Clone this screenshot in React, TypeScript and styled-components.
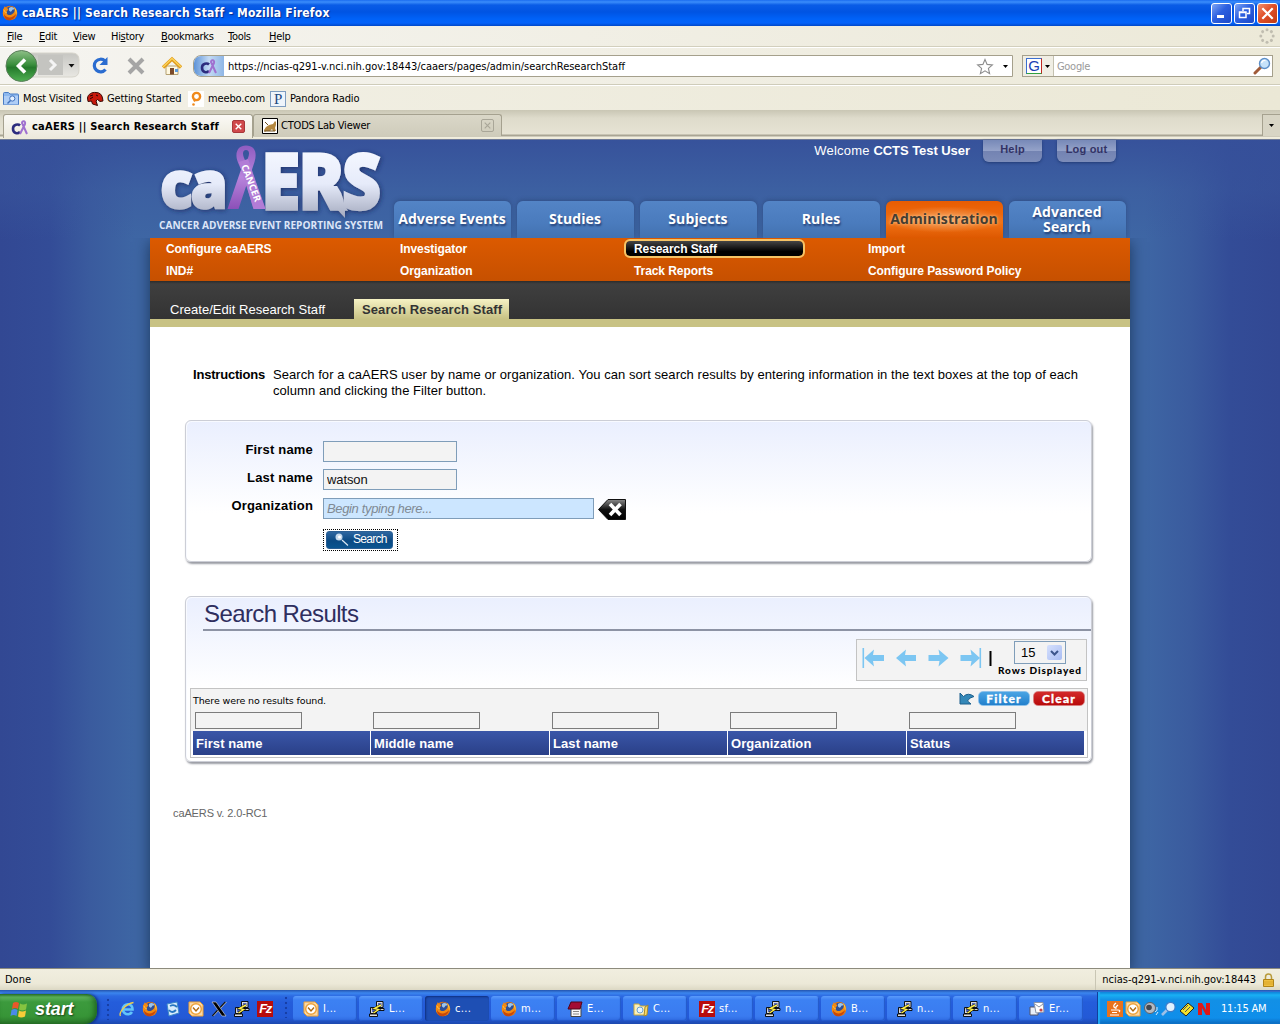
import React from "react";
import styled, { createGlobalStyle, css } from "styled-components";

const tahoma = `"DejaVu Sans Condensed", "DejaVu Sans", sans-serif`;
const arial = `"Liberation Sans", Arial, sans-serif`;
const myriad = `"Open Sans", "Noto Sans", sans-serif`;

const Global = createGlobalStyle`
  * { box-sizing: border-box; }
  body { margin: 0; font-family: ${arial}; overflow: hidden; }
  svg { display: block; flex: none; }
  input { outline: none; }
`;

const Desktop = styled.div`
  width: 1280px;
  height: 1024px;
  display: flex;
  flex-direction: column;
  overflow: hidden;
`;

/* ---------- Browser chrome ---------- */

const TitleBar = styled.header`
  height: 26px;
  flex: none;
  display: flex;
  align-items: center;
  padding: 0 2px;
  background: linear-gradient(#1b6cf0 0, #3b8dfb 2px, #0a5ce6 5px, #0054e3 12px, #0062f8 19px, #0462fa 23px, #0148c8 26px);
`;

const TitleText = styled.h1`
  flex: 1;
  margin: 0 0 0 4px;
  font: bold 12px/28px ${tahoma};
  letter-spacing: 0.21px;
  color: #fff;
  text-shadow: 1px 1px 1px #0a2a8c;
`;

const WinButton = styled.span<{ $close?: boolean }>`
  width: 21px;
  height: 21px;
  margin-left: 2px;
  display: flex;
  align-items: center;
  justify-content: center;
  border: 1px solid #fff;
  border-radius: 3px;
  background: ${(p) =>
    p.$close
      ? "linear-gradient(135deg, #f0906e, #e0502a 45%, #c03a12)"
      : "linear-gradient(135deg, #7fa6f5, #2c60e0 45%, #1c48c8)"};
`;

const MenuBar = styled.nav`
  height: 21px;
  flex: none;
  display: flex;
  align-items: center;
  padding: 0 5px 0 7px;
  background: linear-gradient(90deg, #f5f4f0, #ece9d8);
  border-bottom: 1px solid #d2cfbd;
  font: 11px/20px ${tahoma};
  color: #000;
`;

const MenuItem = styled.span<{ $w: number }>`
  width: ${(p) => p.$w}px;
  padding-top: 1px;
  white-space: nowrap;
  letter-spacing: -0.3px;
`;

const MenuSpacer = styled.span`
  flex: 1;
`;

const NavBar = styled.div`
  height: 38px;
  flex: none;
  display: flex;
  align-items: center;
  padding-left: 3px;
  background: linear-gradient(90deg, #f5f4f0, #ece9d8);
  border-top: 1px solid #fff;
  border-bottom: 1px solid #cfccba;
`;

const UrlBox = styled.div`
  width: 820px;
  height: 22px;
  margin-left: 11px;
  display: flex;
  align-items: center;
  background: #fff;
  border: 1px solid #a5a08c;
  border-radius: 8px 0 0 8px;
  overflow: hidden;
`;

const SiteBadge = styled.span`
  width: 30px;
  height: 20px;
  display: flex;
  justify-content: center;
  align-items: center;
  background: linear-gradient(90deg, #5d93d8, #c3daf4 50%, #8fb6e6);
`;

const UrlText = styled.span`
  flex: 1;
  margin-left: 4px;
  padding-top: 1px;
  font: 11px/20px ${tahoma};
  letter-spacing: -0.015px;
  white-space: nowrap;
`;

const SearchBox = styled.div`
  width: 251px;
  height: 22px;
  margin-left: 9px;
  display: flex;
  align-items: center;
  background: #fff;
  border: 1px solid #a5a08c;
`;

const EnginePicker = styled.span`
  width: 31px;
  height: 20px;
  display: flex;
  align-items: center;
  gap: 3px;
  padding-left: 3px;
  background: #f0eee4;
  border-right: 1px solid #c4c1b0;
`;

const EngineLogo = styled.span`
  width: 16px;
  height: 16px;
  border: 1px solid #3b6fd0;
  border-right-color: #c02a20;
  border-bottom-color: #30a040;
  background: #fff;
  color: #1c3fb4;
  font: 15px/14px ${arial};
  text-align: center;
`;

const Placeholder = styled.span`
  flex: 1;
  margin-left: 3px;
  padding-top: 1px;
  font: 11px/20px ${tahoma};
  letter-spacing: -0.3px;
  color: #9a9a9a;
`;

const BookmarkBar = styled.div`
  height: 25px;
  flex: none;
  display: flex;
  align-items: center;
  padding-left: 3px;
  background: linear-gradient(90deg, #f2f0e6, #ebe8d6);
  border-top: 1px solid #fff;
`;

const Bookmark = styled.span<{ $w: number; $gap?: number }>`
  width: ${(p) => p.$w}px;
  display: flex;
  align-items: center;
  gap: ${(p) => p.$gap ?? 4}px;
  padding-top: 1px;
  font: 11px/26px ${tahoma};
  letter-spacing: -0.14px;
  white-space: nowrap;
`;

const BrowserTabs = styled.div`
  height: 30px;
  flex: none;
  display: flex;
  align-items: flex-start;
  padding: 4px 0 0 3px;
  background: linear-gradient(#c9c6b4, #dedbcb 8px, #e6e3d4 24px, #a9a594 25px, #a9a594 26px, #f2efe0 27px, #ece9d8 29px, #6f7a98 29px);
`;

const BrowserTab = styled.div<{ $active?: boolean; $w: number }>`
  width: ${(p) => p.$w}px;
  height: ${(p) => (p.$active ? 24 : 22)}px;
  display: flex;
  align-items: center;
  padding: 0 7px;
  padding-left: ${(p) => (p.$active ? 7 : 8)}px;
  border: 1px solid #a5a18f;
  border-bottom: 0;
  border-radius: 3px 3px 0 0;
  background: ${(p) => (p.$active ? "linear-gradient(#fbfaf6, #ece9dc)" : "linear-gradient(#dad7c8, #cfccbb)")};
  font: ${(p) => (p.$active ? "bold 11px/20px" : "normal 11px/22px")} ${tahoma};
  letter-spacing: ${(p) => (p.$active ? "0.24px" : "-0.2px")};
  white-space: nowrap;
`;

const TabLabel = styled.span`
  flex: 1;
  margin-left: 3px;
`;

const TabClose = styled.span<{ $active?: boolean }>`
  width: 13px;
  height: 13px;
  display: flex;
  align-items: center;
  justify-content: center;
  border-radius: 2px;
  border: 1px solid ${(p) => (p.$active ? "#a8383a" : "#a9a698")};
  background: ${(p) => (p.$active ? "#d0494b" : "transparent")};
`;

const TabList = styled.span`
  width: 18px;
  height: 22px;
  margin-left: auto;
  display: flex;
  align-items: center;
  justify-content: center;
  border: 1px solid #a5a18f;
  border-right: 0;
  border-bottom: 0;
  background: #d8d5c5;
`;

/* ---------- Web page ---------- */

const Page = styled.main`
  height: 828px;
  flex: none;
  display: flex;
  justify-content: center;
  background:
    linear-gradient(rgba(54, 80, 154, 0.9), rgba(58, 88, 158, 0.45) 50px, rgba(60, 96, 160, 0) 100px),
    linear-gradient(90deg, #324893 0, #334c97 50px, #3a5b9e 90px, #3e66a4 135px, #3e66a4 1145px, #3a5b9e 1190px, #334c97 1230px, #324893);
`;

const Site = styled.div`
  width: 980px;
  display: flex;
  flex-direction: column;
`;

const SiteHeader = styled.div`
  height: 98px;
  display: flex;
  justify-content: space-between;
`;

const HeaderRight = styled.div`
  width: 736px;
  display: flex;
  flex-direction: column;
  justify-content: space-between;
`;

const UserBar = styled.div`
  display: flex;
  justify-content: flex-end;
  padding-right: 14px;
  color: #fff;
`;

const Welcome = styled.span`
  margin-right: 13px;
  font: 13px/22px ${arial};
  letter-spacing: 0.2px;
  b { letter-spacing: -0.05px; }
`;

const UserButton = styled.a`
  width: 59px;
  height: 22px;
  & + & { margin-left: 15px; }
  border-radius: 0 0 6px 6px;
  background: linear-gradient(#7789b8, #95a3c9 11px, #7383b2 11px, #7c8cb9);
  box-shadow: 0 1px 3px rgba(20, 40, 90, 0.6);
  color: #333366;
  font: bold 11px/19px ${arial};
  letter-spacing: 0.2px;
  text-align: center;
`;

const MainTabs = styled.nav`
  display: flex;
  gap: 6px;
`;

const MainTab = styled.a<{ $active?: boolean }>`
  width: 117px;
  height: 37px;
  display: flex;
  align-items: center;
  justify-content: center;
  padding: 0 1px 2px 0;
  border-radius: 6px 6px 0 0;
  text-align: center;
  white-space: pre;
  font: bold 14px/15px ${myriad};
  letter-spacing: 0.1px;
  ${(p) =>
    p.$active
      ? css`
          background: radial-gradient(ellipse 62px 13px at 50% 50%, #f6a766, rgba(240, 120, 40, 0)), linear-gradient(#e85c02, #f07014 60%, #dd5800);
          color: #443c30;
          text-shadow: 0 0 3px #ffc890;
          box-shadow: 0 -1px 4px rgba(30, 50, 90, 0.5);
        `
      : css`
          background: linear-gradient(#5384c6, #4a7bbd 60%, #4272b0);
          color: #fff;
          text-shadow: 1px 2px 2px rgba(20, 40, 90, 0.7);
          box-shadow: 0 -1px 4px rgba(30, 50, 90, 0.4);
        `}
`;

const Body = styled.div`
  flex: 1;
  display: flex;
  flex-direction: column;
  background: #fff;
  box-shadow: 0 4px 14px rgba(20, 45, 75, 0.8);
  clip-path: inset(0 -20px 0 -20px);
`;

const SubMenu = styled.div`
  height: 43px;
  display: grid;
  grid-template-columns: repeat(4, 234px);
  grid-auto-rows: 22px;
  align-content: start;
  background: linear-gradient(#dc5a00, #c65000);
`;

const SubMenuCell = styled.div`
  padding: 1px 0 0 6px;
`;

const SubMenuLink = styled.a<{ $active?: boolean }>`
  width: 181px;
  height: 19px;
  display: block;
  padding-left: 8px;
  border: 2px solid ${(p) => (p.$active ? "#f6c466" : "transparent")};
  border-radius: 6px;
  background: ${(p) => (p.$active ? "linear-gradient(#454545, #000 70%) padding-box" : "none")};
  color: #fff;
  font: bold 12px/17px ${arial};
  letter-spacing: -0.08px;
  white-space: nowrap;
`;

const Tier3 = styled.div`
  height: 46px;
  display: flex;
  align-items: flex-end;
  padding-left: 20px;
  background: linear-gradient(#2c2c2c, #3f3f3f 3px, #333 38px);
  border-bottom: 8px solid #c8c284;
`;

const Tier3Tab = styled.a<{ $active?: boolean }>`
  width: ${(p) => (p.$active ? 155 : 184)}px;
  height: 20px;
  padding-left: ${(p) => (p.$active ? 8 : 0)}px;
  font: ${(p) => (p.$active ? "bold" : "normal")} 13px/22px ${arial};
  letter-spacing: ${(p) => (p.$active ? "0.1px" : "0.03px")};
  color: ${(p) => (p.$active ? "#333" : "#fff")};
  background: ${(p) => (p.$active ? "linear-gradient(#f6f2c4, #c8c284)" : "none")};
  white-space: nowrap;
`;

const Content = styled.div`
  display: flex;
  flex-direction: column;
  padding: 40px 37px 0 35px;
`;

const Instructions = styled.div`
  display: flex;
  gap: 8px;
  padding-left: 8px;
  font: 13px/16px ${arial};
  p { margin: 0; width: 820px; letter-spacing: 0.057px; }
  b { letter-spacing: -0.2px; }
`;

const Panel = styled.section<{ $h: number; $mt: number }>`
  width: 907px;
  height: ${(p) => p.$h}px;
  margin-top: ${(p) => p.$mt}px;
  display: flex;
  flex-direction: column;
  border: 1px solid #ccced6;
  border-radius: 6px;
  background: linear-gradient(#eaeffe, #fff 92px);
  box-shadow: 1px 2px 2px #9a9ca4, inset 1px 1px 0 #f8faff;
`;

const Form = styled.form`
  display: grid;
  grid-template-columns: 127px 1fr;
  grid-template-rows: 28px 28px 33px 24px;
  column-gap: 10px;
  padding-top: 19px;
`;

const Label = styled.label`
  text-align: right;
  font: bold 13px/19px ${arial};
  letter-spacing: 0.18px;
  color: #000;
`;

const Field = styled.div`
  display: flex;
  align-items: flex-start;
`;

const TextInput = styled.input<{ $w: number; $auto?: boolean }>`
  width: ${(p) => p.$w}px;
  height: 21px;
  margin-top: ${(p) => (p.$auto ? 2 : 1)}px;
  padding: 0 3px;
  border: 1px solid #7f9db9;
  background: ${(p) => (p.$auto ? "#cce6ff" : "#f3f3f3")};
  font: ${(p) => (p.$auto ? "italic" : "normal")} 13px/18px ${arial};
  letter-spacing: ${(p) => (p.$auto ? "-0.35px" : "-0.1px")};
  color: ${(p) => (p.$auto ? "#808a94" : "#111")};
`;

const ClearIcon = styled.span`
  margin: 3px 0 0 4px;
`;

const SearchFocus = styled.span`
  width: 75px;
  height: 22px;
  padding: 1px 3px 1px 2px;
  border: 1px dotted #000;
`;

const SearchButton = styled.button`
  width: 67px;
  height: 18px;
  display: flex;
  align-items: center;
  gap: 4px;
  padding: 0 0 2px 8px;
  border: 1px solid #2b5f95;
  border-radius: 3px;
  background: linear-gradient(#2e66a0, #0b4a84 55%, #0a5590);
  color: #fff;
  font: 12px/14px ${arial};
  letter-spacing: -0.7px;
`;

const ResultsTitle = styled.h2`
  height: 34px;
  flex: none;
  margin: 0 0 0 17px;
  padding-left: 1px;
  border-bottom: 2px solid #8d93a4;
  color: #2e2e5e;
  font: 24px/33px ${arial};
  letter-spacing: -0.6px;
`;

const Pager = styled.div`
  width: 231px;
  height: 42px;
  flex: none;
  margin: 8px 4px 0 auto;
  display: flex;
  align-items: center;
  border: 1px solid #c3c3c3;
  background: #f3f3f3;
`;

const PagerIcons = styled.div`
  width: 139px;
  padding: 0 0 5px 5px;
`;

const RowsControl = styled.div`
  margin-left: 2px;
  display: flex;
  flex-direction: column;
  align-items: center;
`;

const RowsSelect = styled.div`
  width: 52px;
  height: 23px;
  margin-top: -3px;
  display: flex;
  align-items: center;
  justify-content: space-between;
  padding: 0 3px 0 6px;
  border: 1px solid #7f9db9;
  background: #f3f3f3;
  font: 13px/20px ${arial};
`;

const SelectArrow = styled.span`
  width: 15px;
  height: 15px;
  display: flex;
  align-items: center;
  justify-content: center;
  border-radius: 2px;
  background: linear-gradient(135deg, #d5e0fd, #a9bdf3);
`;

const RowsLabel = styled.span`
  font: 900 10px/12px Lato, sans-serif;
  letter-spacing: 0.95px;
  white-space: nowrap;
  color: #000;
`;

const Grid = styled.div`
  width: 898px;
  height: 70px;
  flex: none;
  margin: 7px 0 0 4px;
  padding: 0 2px;
  border: 1px solid #c3c3c3;
  background: linear-gradient(#f3f3f3 0 42px, #fff 42px);
`;

const GridTop = styled.div`
  height: 19px;
  margin-bottom: 2px;
  display: flex;
  align-items: center;
  font: 9.5px/20px "DejaVu Sans", sans-serif;
`;

const GridMessage = styled.span`
  flex: 1;
  padding-top: 4px;
  letter-spacing: -0.12px;
`;

const Pill = styled.button<{ $red?: boolean }>`
  width: 52px;
  height: 15px;
  margin-left: 3px;
  padding: 0;
  border: 1px solid ${(p) => (p.$red ? "#d98080" : "#8fc2ea")};
  border-radius: 5px;
  background: ${(p) => (p.$red ? "linear-gradient(#d32a2a, #b80a0a)" : "linear-gradient(#4aa4e4, #2280cc)")};
  color: #fff;
  font: 900 12px/12px Lato, sans-serif;
  letter-spacing: 1.2px;
  -webkit-text-stroke: 0.3px #fff;
`;

const Columns = styled.div<{ $h: number; $head?: boolean }>`
  height: ${(p) => p.$h}px;
  display: grid;
  grid-template-columns: ${(p) => (p.$head ? "177px" : "178px")} 179px 178px 179px 178px;
`;

const FilterInput = styled.input`
  width: 107px;
  height: 17px;
  margin: 2px 0 0 2px;
  border: 1px solid #7c7c7c;
  background: #f3f3f3;
`;

const FilterCell = styled.div`
  display: flex;
  align-items: flex-start;
`;

const ColumnHead = styled.div`
  height: 24px;
  padding-left: 3px;
  background: linear-gradient(#3a56a8, #2a4088);
  & + & { border-left: 1px solid #fff; }
  color: #fff;
  font: bold 13px/25px ${arial};
  letter-spacing: 0.08px;
`;

const Version = styled.footer`
  margin: 43px 0 0 -12px;
  font: 11px/16px ${arial};
  letter-spacing: -0.12px;
  color: #666;
`;

/* ---------- Status bar and taskbar ---------- */

const StatusBar = styled.div`
  height: 22px;
  flex: none;
  display: flex;
  align-items: center;
  justify-content: space-between;
  padding: 0 6px 0 5px;
  border-top: 1px solid #8d8b7d;
  background: linear-gradient(#f1eedf, #ece9d8 70%, #dcd8c4);
  font: 11px/20px ${tahoma};
  letter-spacing: -0.02px;
`;

const StatusHost = styled.span`
  display: flex;
  gap: 7px;
  align-items: center;
  padding-left: 6px;
  border-left: 1px solid #c9c6b4;
`;

const Taskbar = styled.div`
  height: 34px;
  flex: none;
  display: flex;
  align-items: flex-end;
  background: linear-gradient(#2454ae, #3b86ee 3px, #2c6ae2 6px, #245ddb 12px, #2359d6 28px, #1c48ae);
`;

const StartButton = styled.div`
  width: 97px;
  height: 30px;
  display: flex;
  align-items: center;
  gap: 6px;
  padding-left: 10px;
  border-radius: 0 10px 12px 0;
  background: linear-gradient(#2f7d30, #5db35c 3px, #3c9a3d 8px, #379537 22px, #2c7a2c);
  box-shadow: 2px 0 3px rgba(0, 20, 80, 0.6), inset -3px 0 5px rgba(10, 60, 10, 0.5);
  color: #fff;
  font: italic bold 18px/28px ${arial};
  letter-spacing: -0.1px;
  text-shadow: 1px 1px 2px #184018;
`;

const QuickLaunch = styled.div`
  width: 187px;
  height: 30px;
  display: flex;
  align-items: center;
  gap: 7px;
  padding-left: 9px;
`;

const Grip = styled.span`
  width: 4px;
  height: 22px;
  margin-right: 2px;
  align-self: center;
  background: radial-gradient(circle at 2px 2px, #173fa6 1px, transparent 1.6px) 0 0 / 4px 5px;
`;

const Tasks = styled.div`
  flex: 1;
  height: 30px;
  display: flex;
  padding: 2px 0 0 3px;
`;

const Task = styled.div<{ $active?: boolean }>`
  width: 64px;
  height: 25px;
  margin-right: 2px;
  flex: none;
  display: flex;
  align-items: center;
  gap: 4px;
  padding-left: 10px;
  border-radius: 3px;
  background: ${(p) => (p.$active ? "#1e4fb4" : "linear-gradient(#5a9bfb, #3c81f3 4px, #3a7bf0 20px, #2f6ae0)")};
  box-shadow: ${(p) => (p.$active ? "inset 1px 1px 2px #0f3080" : "inset -1px -1px 1px #2358c8")};
  color: #fff;
  font: 11px/24px ${tahoma};
  letter-spacing: 0.3px;
  white-space: nowrap;
`;

const Tray = styled.div`
  width: 183px;
  height: 32px;
  display: flex;
  align-items: center;
  gap: 2px;
  padding: 1px 0 0 9px;
  border-left: 1px solid #10409c;
  background: linear-gradient(#0d7fd8, #19b0f4 3px, #1290e6 8px, #0f8eea 26px, #0b68bc);
  box-shadow: inset 2px 0 1px #20a8f4;
  color: #fff;
  font: 11px/20px ${tahoma};
  letter-spacing: -0.2px;
  white-space: nowrap;
`;

const Clock = styled.span`
  margin-left: 8px;
`;

/* ---------- Icons ---------- */

const Firefox = () => (
  <svg width="16" height="16" viewBox="0 0 16 16">
    <circle cx="8" cy="8" r="7.300" fill="#e8760e" />
    <circle cx="8.600" cy="6.600" r="5.200" fill="#2d4f98" />
    <path d="M7 3c2-2 5-1 5.500 1-1 1-2 0-2.500 1.500S8 7 7 5.500z" fill="#9cc4ec" />
    <path d="M1 4c1 0 1-2 2-3 0 1.500 1.500 2 3.500 3-.5 1.500-2 2-2 4 1 3 5 2.500 7 0 1.500-1.500 1.500-4 .5-6 3.500 3 3.500 8 0 11-4 3-10 1-11-4z" fill="#f28a12" />
    <path d="M2 9c2 4 8 5 12 0-1 5-5 7-9 6-2-1-3-3-3-6z" fill="#c8480a" />
    <path d="M12 2c3 3 3 6 2 8 0-3-1-5-2-8z" fill="#fbd34a" />
    <path d="M2 5q1 3 3 3" fill="none" stroke="#fbc048" />
  </svg>
);

const CaMark = () => (
  <svg width="18" height="16" viewBox="0 0 18 16">
    <path d="M9 6.500C7.500 5 2 5 2 9.800S7 15 9 13" fill="none" stroke="#2c2c7e" strokeWidth="2.600" />
    <path d="M9 15 14 5c1-3-3-4-3-1l5 11" fill="none" stroke="#a070d0" strokeWidth="2" />
  </svg>
);

const Caret = () => (
  <svg width="5" height="3" viewBox="0 0 5 3">
    <path d="M0 0h5L2.500 3z" fill="#000" />
  </svg>
);

const BackForward = () => (
  <svg width="78" height="34" viewBox="0 0 78 34">
    <defs>
      <linearGradient id="back" x1="0" y1="0" x2="0" y2="1">
        <stop offset="0" stopColor="#8fc088" />
        <stop offset=".45" stopColor="#3b8f3e" />
        <stop offset=".55" stopColor="#257a2c" />
        <stop offset="1" stopColor="#4fb052" />
      </linearGradient>
      <linearGradient id="fwd" x1="0" y1="0" x2="0" y2="1">
        <stop offset="0" stopColor="#c6c6c2" />
        <stop offset="1" stopColor="#e8e7e2" />
      </linearGradient>
    </defs>
    <path d="M10 4h59q7 0 7 7v10q0 7-7 7H10z" fill="url(#fwd)" stroke="#d6d4cb" />
    <path d="M35 6h25v20H35z" fill="#c4c4c0" />
    <path d="m47 11 5 5-5 5" fill="none" stroke="#f4f4f4" strokeWidth="3" />
    <path d="M65.500 15h6l-3 3.500z" fill="#111" />
    <circle cx="18.500" cy="17" r="15.500" fill="url(#back)" stroke="#5b7f5b" />
    <path d="m22 10.500-6.500 6.500 6.500 6.500" fill="none" stroke="#fff" strokeWidth="3.600" />
  </svg>
);

const NavIcons = () => (
  <svg width="101" height="22" viewBox="-9 0 101 22">
    <path d="M15 6A6.300 6.300 0 1 0 15.500 14.500" fill="none" stroke="#2a6cd0" strokeWidth="3.200" />
    <path d="M17.500 2v8H9.500z" fill="#2a6cd0" />
    <path d="m39 4 14 14M53 4 39 18" stroke="#a5a5a5" strokeWidth="4" />
    <path d="M76 11h12v8.500H76z" fill="#fff8e0" stroke="#b5a070" />
    <path d="M73 12.500 82 4l9 8.500" fill="none" stroke="#e09a18" strokeWidth="3.400" />
    <path d="M73 12 82 3.500l9 8.500" fill="none" stroke="#fbd35a" strokeWidth="1.400" />
    <path d="M80 13h4v6.500h-4z" fill="#7a4a2a" />
    <path d="M85 14h3v3h-3z" fill="#5a9be0" />
  </svg>
);

const Magnifier = () => (
  <svg width="18" height="18" viewBox="0 0 18 18">
    <path d="m2 16 6-6" stroke="#a05a38" strokeWidth="3" strokeLinecap="round" />
    <circle cx="11.500" cy="6.500" r="5" fill="#c6e2fa" stroke="#5d8fc8" strokeWidth="1.400" />
    <path d="M8.500 6q1-3 4-2.500" fill="none" stroke="#fff" strokeWidth="1.300" />
  </svg>
);

const TrayMagnifier = () => (
  <svg width="16" height="16" viewBox="0 0 16 16">
    <path d="m1 14 5-5" stroke="#9cc0e8" strokeWidth="2.600" />
    <circle cx="9.500" cy="6" r="4.600" fill="#e2f2ff" stroke="#3f7cc8" strokeWidth="1.200" />
  </svg>
);

const Star = () => (
  <svg width="18" height="17" viewBox="0 0 18 17">
    <path d="m9 1.500 2.100 4.900 5.300.5-4 3.500 1.200 5.200L9 12.800l-4.600 2.800 1.200-5.200-4-3.500 5.300-.5z" fill="#fff" stroke="#8d8d8d" strokeWidth="1.100" />
  </svg>
);

const Throbber = () => (
  <svg width="16" height="16" viewBox="0 0 16 16" fill="#c0bdb0">
    {[0, 45, 90, 135, 180, 225, 270, 315].map((a) => (
      <circle key={a} cx="8" cy="1.800" r="1.500" transform={`rotate(${a} 8 8)`} />
    ))}
  </svg>
);

const SmartFolder = () => (
  <svg width="16" height="15" viewBox="0 0 16 15">
    <path d="M.5 2.500q0-1 1-1h4l1.500 1.500h7.500q1 0 1 1v9.500H.5z" fill="#8db8ee" stroke="#4a7cc4" />
    <path d="M1 5h14v8.500H1z" fill="#aecdf6" />
    <circle cx="9.300" cy="7.500" r="2.600" fill="#e4f0ff" stroke="#3f70bc" />
    <path d="m7.500 9.500-3 3" stroke="#3f70bc" strokeWidth="1.500" />
  </svg>
);

const Mozilla = () => (
  <svg width="17" height="16" viewBox="0 0 17 16">
    <path d="M.5 7C1 3 5 1 9 1.500c4 0 6 2.500 6.500 5.500l.5 3-3 .5-2.500-2-1.500 1.500 1.500 4.500-5-1.500-1-3-3.500.5z" fill="#c8190c" stroke="#3a0904" />
    <path d="m9 4 2 1M3 5l3-1M3 8l3-2" stroke="#2a0502" />
  </svg>
);

const Meebo = () => (
  <svg width="16" height="16" viewBox="0 0 16 16">
    <path d="M0 0h16v16H0z" fill="#fff" />
    <circle cx="8.500" cy="5.500" r="3.600" fill="none" stroke="#f08a1c" strokeWidth="2.400" />
    <path d="m6 8.500 1 2" stroke="#f08a1c" strokeWidth="2" />
    <circle cx="5.500" cy="13.500" r="1.300" fill="#f08a1c" />
  </svg>
);

const PandoraBox = styled.span`
  width: 16px;
  height: 16px;
  border: 1px solid #7d9cc0;
  background: #eef4fb;
  color: #1e4a80;
  font: 15px/14px "Liberation Serif", serif;
  text-align: center;
`;

const LabIcon = () => (
  <svg width="16" height="16" viewBox="0 0 16 16">
    <path d="M.5.500h15v15H.5z" fill="#fff" stroke="#000" />
    <path d="m2 12 2-3 3-2 4-1 2-3 1 1v3l-1 3 1 3h-3l-1-2-2 2H4l-1 1z" fill="#b48840" />
    <path d="M2 13h11M3 4l3 3" stroke="#6e5020" />
  </svg>
);

const Cross = ({ size, color, width }: { size: number; color: string; width: number }) => (
  <svg width={size} height={size} viewBox="0 0 10 10">
    <path d="m1 1 8 8M9 1 1 9" stroke={color} strokeWidth={width} />
  </svg>
);

const Logo = () => (
  <svg width="240" height="98" viewBox="150 140 240 98">
    <defs>
      <linearGradient id="silver" gradientUnits="userSpaceOnUse" x1="0" y1="152" x2="0" y2="216">
        <stop offset="0" stopColor="#f4f7ff" />
        <stop offset=".5" stopColor="#e6ebfa" />
        <stop offset="1" stopColor="#a8aec2" />
      </linearGradient>
      <linearGradient id="violet" x1="0" y1="0" x2="0" y2="1">
        <stop offset="0" stopColor="#8f5cc0" />
        <stop offset=".5" stopColor="#b884dc" />
        <stop offset="1" stopColor="#8c50b8" />
      </linearGradient>
      <filter id="drop" x="-10%" y="-10%" width="120%" height="130%">
        <feDropShadow dx="1" dy="1" stdDeviation="2.500" floodColor="#14285c" floodOpacity=".8" />
      </filter>
    </defs>
    <g filter="url(#drop)" fill="url(#silver)" stroke="url(#silver)" fontFamily="Noto Sans" fontWeight="700">
      <text x="161" y="207" fontSize="62" strokeWidth="4.500" textLength="66" lengthAdjust="spacingAndGlyphs">ca</text>
      <text x="262" y="207.500" fontSize="73" strokeWidth="5.500" textLength="118" lengthAdjust="spacingAndGlyphs">ERS</text>
      <path d="M325 186q9 12 11 22l9 10q1-20-8-32z" stroke="none" />
    </g>
    <path
      d="M246 145.500c-8 0-12 7-8 17l3 7L227.500 209h11l8-24 7 24h12l-14-38 3-9c3-10 0-16.500-8.500-16.500zm0 4.500c4 0 4 5 0 12-4-7-4-12 0-12z"
      fill="url(#violet)"
      fillRule="evenodd"
    />
    <path d="m239 162 9-3 17.500 50h-12z" fill="#b27cd6" />
    <text x="0" y="0" transform="translate(241 166) rotate(69)" fontFamily="Open Sans" fontWeight="700" fontSize="9.500" fill="#fff" textLength="39" lengthAdjust="spacingAndGlyphs">CANCER</text>
    <text x="159" y="229" fontFamily="Open Sans" fontWeight="700" fontSize="10.300" fill="#dde6f8" textLength="224" lengthAdjust="spacingAndGlyphs">CANCER ADVERSE EVENT REPORTING SYSTEM</text>
  </svg>
);

const Backspace = () => (
  <svg width="28" height="21" viewBox="0 0 28 21">
    <defs>
      <linearGradient id="key" x1="0" y1="0" x2="0" y2="1">
        <stop offset="0" stopColor="#8a8a8a" />
        <stop offset=".5" stopColor="#111" />
        <stop offset="1" stopColor="#000" />
      </linearGradient>
    </defs>
    <path d="M.5 10.500 10 .5h17.500v20H10z" fill="url(#key)" stroke="#111" />
    <path d="m12 5 10.500 11M22.500 5 12 16" stroke="#fff" strokeWidth="3.600" />
  </svg>
);

const SearchGlyph = () => (
  <svg width="14" height="13" viewBox="0 0 14 13">
    <circle cx="4" cy="4" r="3.500" fill="#c4d8ec" />
    <circle cx="4.500" cy="4" r="1.500" fill="#fff" />
    <path d="m7 7 6 5.500" stroke="#dbe8f4" strokeWidth="1.200" />
  </svg>
);

const PagerArrows = () => (
  <svg width="131" height="22" viewBox="0 0 131 22" fill="#7cc6f2">
    <path d="M.5 1h1.600v20H.5zM2.500 11 12 2.500 11 8h11v6H11l1 5.500z" />
    <path d="M34 11 44 2.500 43 8h11v6H43l1 5.500z" />
    <path d="M86.500 11 76.500 2.500l1 5.500h-11v6h11l-1 5.500z" />
    <path d="M118 11 108.500 2.500l1 5.500h-11v6h11l-1 5.500zM117.500 1h1.600v20h-1.600z" />
    <path d="M127.500 4h2v15h-2z" fill="#000" />
  </svg>
);

const Undo = () => (
  <svg width="16" height="13" viewBox="0 0 16 13">
    <path d="M1 1v11h11L8.500 9Q10 5.500 15 4.500 9 0 4.500 4.500z" fill="#3488b8" stroke="#1d5f8c" />
  </svg>
);

const InternetExplorer = () => (
  <svg width="16" height="16" viewBox="0 0 16 16">
    <path d="M13 5.500A5 5 0 1 0 13 11M4 8.500h9.500q0-2-.7-3.200" fill="none" stroke="#62c4fa" strokeWidth="2.600" />
    <path d="M1.500 15C-.5 12 6 3 14.500 1.500" fill="none" stroke="#f2ce4a" strokeWidth="1.300" />
  </svg>
);

const OutlookExpress = () => (
  <svg width="16" height="16" viewBox="0 0 16 16">
    <path d="M2 3 12 1l2 11-10 3z" fill="#d8ecfc" stroke="#3d8ac8" />
    <path d="M5 5q4-2 7 1M11 9q-4 4-7 0" fill="none" stroke="#2676c0" strokeWidth="1.800" />
  </svg>
);

const Outlook = () => (
  <svg width="16" height="16" viewBox="0 0 16 16">
    <path d="M1 1h11l3 3v11H4l-3-3z" fill="#f9d9a8" stroke="#f0a030" />
    <circle cx="8" cy="8" r="5.300" fill="#fff" stroke="#eda23a" strokeWidth="1.500" />
    <path d="m5 6.500 3 3.500 3-3.500" fill="none" stroke="#b06a10" strokeWidth="1.400" />
  </svg>
);

const XWin = () => (
  <svg width="16" height="16" viewBox="0 0 16 16">
    <path d="M14.500 1 1.500 15" stroke="#111" strokeWidth="1.800" />
    <path d="M15.500 1 2.500 15" stroke="#d0d0d0" strokeWidth=".8" />
    <path d="M1 1h4l10 14h-4z" fill="#000" stroke="#ddd" strokeWidth=".6" />
  </svg>
);

const Putty = () => (
  <svg width="16" height="16" viewBox="0 0 16 16">
    <path d="M7.500.5h6.500v6H7.500zM9 7.500h6v2H9zM1.500 6.500h6v6h-6zM.5 13h8v2.500h-8z" fill="#dcdcdc" stroke="#000" strokeWidth=".9" />
    <path d="M9 2h3.500v3H9zM3 8h3v3H3z" fill="#5468b8" />
    <path d="m12 4-6.500 3.500 4 1L4.500 12" fill="none" stroke="#000" strokeWidth="2.400" />
    <path d="m12 4-6.500 3.500 4 1L4.500 12" fill="none" stroke="#fff04a" strokeWidth="1.500" />
  </svg>
);

const FzBox = styled.span`
  width: 16px;
  height: 16px;
  flex: none;
  background: #b80c0c;
  color: #fff;
  font: italic bold 13px/16px ${arial};
  letter-spacing: -1.5px;
  text-align: center;
`;

const Notebook = () => (
  <svg width="16" height="16" viewBox="0 0 16 16">
    <path d="M4 5h10v10.500H4z" fill="#f8f8f8" stroke="#444" />
    <path d="M4 1h11l-2 7H1z" fill="#a40c34" stroke="#500418" />
    <path d="M6 10.500h6M6 13h6" stroke="#888" />
  </svg>
);

const Folder = () => (
  <svg width="16" height="16" viewBox="0 0 16 16">
    <path d="M1 3h5l1.500 2H13v9H1z" fill="#fbf0bc" stroke="#c8a83c" />
    <path d="m15 4-1 10-3 1 1-9z" fill="#f9d968" stroke="#a98a2a" />
    <circle cx="7" cy="9" r="3" fill="#e6f4ff" stroke="#6ba0d0" />
  </svg>
);

const Letter = () => (
  <svg width="16" height="16" viewBox="0 0 16 16">
    <path d="M1 6h8v8H1z" fill="#e8eef8" stroke="#556" />
    <path d="M5 1.500h9L15 11l-8 1z" fill="#fff" stroke="#8a94a8" />
    <path d="m6 3 4 3 4-3" fill="none" stroke="#8a94a8" />
    <circle cx="12" cy="9" r="1.600" fill="#c84848" />
  </svg>
);

const JavaTray = () => (
  <svg width="16" height="16" viewBox="0 0 16 16">
    <path d="M0 0h16v16H0z" fill="#e8721c" />
    <path d="M9 2q-4 3-1 5M11 4q-3 2-2 4M4 9h7q3 0 1 2M5 11.500h5M3 14h9" fill="none" stroke="#fff" strokeWidth="1.200" />
  </svg>
);

const Speaker = () => (
  <svg width="16" height="16" viewBox="0 0 16 16">
    <circle cx="7" cy="7" r="5.500" fill="#b4bac2" stroke="#5a606a" />
    <circle cx="6" cy="6.500" r="2.800" fill="#41464e" />
    <path d="M12 11q3-1 2-5M13 14l2-3" fill="none" stroke="#d8e8f8" />
  </svg>
);

const YellowTag = () => (
  <svg width="16" height="16" viewBox="0 0 16 16">
    <path d="m1 10 8-8 6 5-8 8z" fill="#f0e02a" stroke="#222" />
    <path d="m4 9 5-5M6 11l5-5" stroke="#555" />
  </svg>
);

const NetN = () => (
  <svg width="14" height="16" viewBox="0 0 14 16">
    <path d="M1 2h4l4 7V2h4v12H9L5 7v7H1z" fill="#e01818" />
  </svg>
);

const WindowsFlag = () => (
  <svg width="19" height="17" viewBox="0 0 19 17">
    <path d="M3 2q3-2 6 0L8 8Q5 6 2 8z" fill="#e8582a" />
    <path d="M10 2.500q3 2 7 0L16 8.500q-4 2-7 0z" fill="#86c440" />
    <path d="M1.500 9q3-2 6 0l-1 6q-3-2-6 0z" fill="#4a8ae8" />
    <path d="M9 9.500q3 2 7 0l-1 6q-4 2-7 0z" fill="#f8cc38" />
  </svg>
);

const Lock = () => (
  <svg width="11" height="14" viewBox="0 0 11 14">
    <path d="M2.500 7V4a3 3 0 0 1 6 0v3" fill="none" stroke="#b89a3a" strokeWidth="1.500" />
    <path d="M.5 6.500h10v7H.5z" fill="#f0c040" stroke="#b08418" />
    <path d="M1 9h9M1 11h9" stroke="#d8a428" />
  </svg>
);

/* ---------- Data ---------- */

const menu = [
  { pre: "", key: "F", post: "ile", w: 32 },
  { pre: "", key: "E", post: "dit", w: 34 },
  { pre: "", key: "V", post: "iew", w: 38 },
  { pre: "Hi", key: "s", post: "tory", w: 50 },
  { pre: "", key: "B", post: "ookmarks", w: 67 },
  { pre: "", key: "T", post: "ools", w: 41 },
  { pre: "", key: "H", post: "elp", w: 30 },
];

const mainTabs = ["Adverse Events", "Studies", "Subjects", "Rules", "Administration", "Advanced\nSearch"];

const subMenu = [
  "Configure caAERS", "Investigator", "Research Staff", "Import",
  "IND#", "Organization", "Track Reports", "Configure Password Policy",
];

const columns = ["First name", "Middle name", "Last name", "Organization", "Status"];

const tasks = [
  { icon: <Outlook />, label: "I..." },
  { icon: <Putty />, label: "L..." },
  { icon: <Firefox />, label: "c...", active: true },
  { icon: <Firefox />, label: "m..." },
  { icon: <Notebook />, label: "E..." },
  { icon: <Folder />, label: "C..." },
  { icon: <FzBox>Fz</FzBox>, label: "sf..." },
  { icon: <Putty />, label: "n..." },
  { icon: <Firefox />, label: "B..." },
  { icon: <Putty />, label: "n..." },
  { icon: <Putty />, label: "n..." },
  { icon: <Letter />, label: "Er..." },
];

const CaretSlot = styled.span`
  margin: 0 4px 0 9px;
`;

const MagnifierSlot = styled.span`
  margin-right: 1px;
`;

/* ---------- Sections ---------- */

const BrowserChrome = () => (
  <>
    <TitleBar>
      <Firefox />
      <TitleText>caAERS || Search Research Staff - Mozilla Firefox</TitleText>
      <WinButton>
        <svg width="11" height="11"><path d="M1 7h7v3H1z" fill="#fff" /></svg>
      </WinButton>
      <WinButton>
        <svg width="13" height="12" fill="none" stroke="#fff" strokeWidth="1.500">
          <path d="M5 4V1.500h6.500v5H9M1.500 5H8v5.500H1.500zM1.500 5.500H8" />
        </svg>
      </WinButton>
      <WinButton $close>
        <Cross size={13} color="#fff" width={1.7} />
      </WinButton>
    </TitleBar>
    <MenuBar>
      {menu.map((m) => (
        <MenuItem key={m.key + m.post} $w={m.w}>
          {m.pre}<u>{m.key}</u>{m.post}
        </MenuItem>
      ))}
      <MenuSpacer />
      <Throbber />
    </MenuBar>
    <NavBar>
      <BackForward />
      <NavIcons />
      <UrlBox>
        <SiteBadge><CaMark /></SiteBadge>
        <UrlText>https://ncias-q291-v.nci.nih.gov:18443/caaers/pages/admin/searchResearchStaff</UrlText>
        <Star />
        <CaretSlot><Caret /></CaretSlot>
      </UrlBox>
      <SearchBox>
        <EnginePicker>
          <EngineLogo>G</EngineLogo>
          <Caret />
        </EnginePicker>
        <Placeholder>Google</Placeholder>
        <MagnifierSlot><Magnifier /></MagnifierSlot>
      </SearchBox>
    </NavBar>
    <BookmarkBar>
      <Bookmark $w={84}><SmartFolder />Most Visited</Bookmark>
      <Bookmark $w={101} $gap={3}><Mozilla />Getting Started</Bookmark>
      <Bookmark $w={82}><Meebo />meebo.com</Bookmark>
      <Bookmark $w={100}><PandoraBox>P</PandoraBox>Pandora Radio</Bookmark>
    </BookmarkBar>
    <BrowserTabs>
      <BrowserTab $active $w={250}>
        <CaMark />
        <TabLabel>caAERS || Search Research Staff</TabLabel>
        <TabClose $active><Cross size={7} color="#fff" width={2} /></TabClose>
      </BrowserTab>
      <BrowserTab $w={249}>
        <LabIcon />
        <TabLabel>CTODS Lab Viewer</TabLabel>
        <TabClose><Cross size={7} color="#a9a698" width={1.6} /></TabClose>
      </BrowserTab>
      <TabList><Caret /></TabList>
    </BrowserTabs>
  </>
);

const SearchForm = () => (
  <Panel $h={142} $mt={21}>
    <Form>
      <Label>First name</Label>
      <Field><TextInput $w={134} /></Field>
      <Label>Last name</Label>
      <Field><TextInput $w={134} defaultValue="watson" /></Field>
      <Label>Organization</Label>
      <Field>
        <TextInput $w={271} $auto defaultValue="Begin typing here..." />
        <ClearIcon><Backspace /></ClearIcon>
      </Field>
      <span />
      <Field>
        <SearchFocus>
          <SearchButton type="button"><SearchGlyph />Search</SearchButton>
        </SearchFocus>
      </Field>
    </Form>
  </Panel>
);

const Results = () => (
  <Panel $h={166} $mt={34}>
    <ResultsTitle>Search Results</ResultsTitle>
    <Pager>
      <PagerIcons><PagerArrows /></PagerIcons>
      <RowsControl>
        <RowsSelect>
          15
          <SelectArrow>
            <svg width="9" height="6"><path d="m1 1 3.500 3.500L8 1" fill="none" stroke="#3c558c" strokeWidth="2" /></svg>
          </SelectArrow>
        </RowsSelect>
        <RowsLabel>Rows Displayed</RowsLabel>
      </RowsControl>
    </Pager>
    <Grid>
      <GridTop>
        <GridMessage>There were no results found.</GridMessage>
        <Undo />
        <Pill>Filter</Pill>
        <Pill $red>Clear</Pill>
      </GridTop>
      <Columns $h={21}>
        {columns.map((c) => <FilterCell key={c}><FilterInput /></FilterCell>)}
      </Columns>
      <Columns $h={24} $head>
        {columns.map((c) => <ColumnHead key={c}>{c}</ColumnHead>)}
      </Columns>
    </Grid>
  </Panel>
);

const WebPage = () => (
  <Page>
    <Site>
      <SiteHeader>
        <Logo />
        <HeaderRight>
          <UserBar>
            <Welcome>Welcome <b>CCTS Test User</b></Welcome>
            <UserButton>Help</UserButton>
            <UserButton>Log out</UserButton>
          </UserBar>
          <MainTabs>
            {mainTabs.map((t) => <MainTab key={t} $active={t === "Administration"}>{t}</MainTab>)}
          </MainTabs>
        </HeaderRight>
      </SiteHeader>
      <Body>
        <SubMenu>
          {subMenu.map((s) => (
            <SubMenuCell key={s}>
              <SubMenuLink $active={s === "Research Staff"}>{s}</SubMenuLink>
            </SubMenuCell>
          ))}
        </SubMenu>
        <Tier3>
          <Tier3Tab>Create/Edit Research Staff</Tier3Tab>
          <Tier3Tab $active>Search Research Staff</Tier3Tab>
        </Tier3>
        <Content>
          <Instructions>
            <b>Instructions</b>
            <p>
              Search for a caAERS user by name or organization. You can sort search results by entering
              information in the text boxes at the top of each column and clicking the Filter button.
            </p>
          </Instructions>
          <SearchForm />
          <Results />
          <Version>caAERS v. 2.0-RC1</Version>
        </Content>
      </Body>
    </Site>
  </Page>
);

const BottomBars = () => (
  <>
    <StatusBar>
      <span>Done</span>
      <StatusHost>ncias-q291-v.nci.nih.gov:18443 <Lock /></StatusHost>
    </StatusBar>
    <Taskbar>
      <StartButton><WindowsFlag />start</StartButton>
      <QuickLaunch>
        <Grip />
        <InternetExplorer /><Firefox /><OutlookExpress /><Outlook /><XWin /><Putty /><FzBox>Fz</FzBox>
      </QuickLaunch>
      <Grip />
      <Tasks>
        {tasks.map((t, i) => <Task key={i} $active={t.active}>{t.icon}{t.label}</Task>)}
      </Tasks>
      <Tray>
        <JavaTray /><Outlook /><Speaker /><TrayMagnifier /><YellowTag /><NetN />
        <Clock>11:15 AM</Clock>
      </Tray>
    </Taskbar>
  </>
);

export default function App() {
  return (
    <Desktop>
      <Global />
      <BrowserChrome />
      <WebPage />
      <BottomBars />
    </Desktop>
  );
}
